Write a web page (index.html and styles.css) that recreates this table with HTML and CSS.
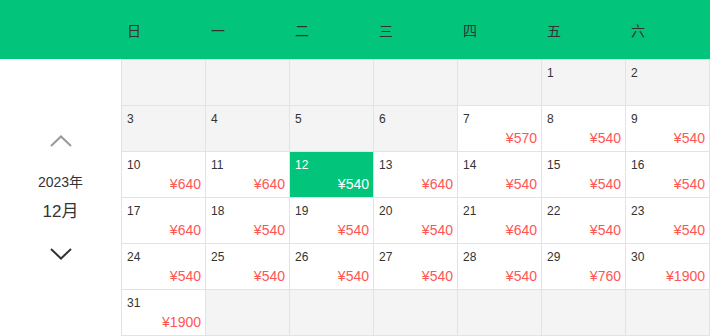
FILE: index.html
```html
<!DOCTYPE html>
<html lang="zh">
<head>
<meta charset="utf-8">
<link rel="stylesheet" href="styles.css">
</head>
<body>
<div class="cal">
  <div class="head">
    <div class="head-spacer"></div>
    <div class="wd">日</div><div class="wd">一</div><div class="wd">二</div><div class="wd">三</div><div class="wd">四</div><div class="wd">五</div><div class="wd">六</div>
  </div>
  <div class="body">
    <div class="side">
      <svg class="chev up" width="22" height="12" viewBox="0 0 22 12"><polyline points="1,11 11,1.5 21,11" fill="none" stroke="#9a9a9a" stroke-width="2"/></svg>
      <div class="year">2023年</div>
      <div class="month">12月</div>
      <svg class="chev down" width="22" height="12" viewBox="0 0 22 12"><polyline points="1,1 11,10.5 21,1" fill="none" stroke="#333" stroke-width="2"/></svg>
    </div>
    <div class="grid">
      <div class="cell off"></div><div class="cell off"></div><div class="cell off"></div><div class="cell off"></div><div class="cell off"></div>
      <div class="cell off"><span class="d">1</span></div>
      <div class="cell off"><span class="d">2</span></div>

      <div class="cell off"><span class="d">3</span></div>
      <div class="cell off"><span class="d">4</span></div>
      <div class="cell off"><span class="d">5</span></div>
      <div class="cell off"><span class="d">6</span></div>
      <div class="cell"><span class="d">7</span><span class="p">¥570</span></div>
      <div class="cell"><span class="d">8</span><span class="p">¥540</span></div>
      <div class="cell"><span class="d">9</span><span class="p">¥540</span></div>

      <div class="cell"><span class="d">10</span><span class="p">¥640</span></div>
      <div class="cell"><span class="d">11</span><span class="p">¥640</span></div>
      <div class="cell sel"><span class="d">12</span><span class="p">¥540</span></div>
      <div class="cell"><span class="d">13</span><span class="p">¥640</span></div>
      <div class="cell"><span class="d">14</span><span class="p">¥540</span></div>
      <div class="cell"><span class="d">15</span><span class="p">¥540</span></div>
      <div class="cell"><span class="d">16</span><span class="p">¥540</span></div>

      <div class="cell"><span class="d">17</span><span class="p">¥640</span></div>
      <div class="cell"><span class="d">18</span><span class="p">¥540</span></div>
      <div class="cell"><span class="d">19</span><span class="p">¥540</span></div>
      <div class="cell"><span class="d">20</span><span class="p">¥540</span></div>
      <div class="cell"><span class="d">21</span><span class="p">¥640</span></div>
      <div class="cell"><span class="d">22</span><span class="p">¥540</span></div>
      <div class="cell"><span class="d">23</span><span class="p">¥540</span></div>

      <div class="cell"><span class="d">24</span><span class="p">¥540</span></div>
      <div class="cell"><span class="d">25</span><span class="p">¥540</span></div>
      <div class="cell"><span class="d">26</span><span class="p">¥540</span></div>
      <div class="cell"><span class="d">27</span><span class="p">¥540</span></div>
      <div class="cell"><span class="d">28</span><span class="p">¥540</span></div>
      <div class="cell"><span class="d">29</span><span class="p">¥760</span></div>
      <div class="cell"><span class="d">30</span><span class="p">¥1900</span></div>

      <div class="cell"><span class="d">31</span><span class="p">¥1900</span></div>
      <div class="cell off"></div><div class="cell off"></div><div class="cell off"></div><div class="cell off"></div><div class="cell off"></div><div class="cell off"></div>
    </div>
  </div>
</div>
</body>
</html>
```

FILE: styles.css
```css
* { box-sizing: border-box; }
html, body { margin: 0; padding: 0; background: #fff; }
body {
  font-family: "Liberation Sans", "Noto Sans CJK SC", sans-serif;
  color: #333;
}
.cal { width: 710px; }
.head {
  display: flex;
  height: 59px;
  background: #02c57b;
  align-items: center;
}
.head-spacer { width: 121px; }
.wd {
  width: 84px;
  padding-left: 6px;
  font-size: 14px;
  line-height: 20px;
  color: #333;
  font-family: "Noto Sans CJK SC", sans-serif;
}
.body { display: flex; }
.side {
  width: 121px;
  height: 277px;
  display: flex;
  flex-direction: column;
  align-items: center;
  justify-content: center;
}
.chev { display: block; }
.year {
  margin-top: 25px;
  font-size: 14px;
  line-height: 20px;
}
.month {
  margin-top: 8px;
  font-size: 17px;
  line-height: 24px;
}
.chev.down { margin-top: 24px; }
.grid {
  display: grid;
  grid-template-columns: repeat(7, 84px);
  grid-auto-rows: 46px;
  border-right: 1px solid #e3e3e3;
  border-bottom: 1px solid #e3e3e3;
}
.cell {
  border-left: 1px solid #e3e3e3;
  border-top: 1px solid #e3e3e3;
  background: #fff;
  display: flex;
  flex-direction: column;
  justify-content: space-between;
  padding: 6px 4px 5px 5px;
}
.cell.off { background: #f4f4f4; }
.cell.sel { background: #02c57b; }
.d {
  font-size: 12px;
  line-height: 14px;
  color: #333;
}
.p {
  font-size: 14px;
  line-height: 16px;
  text-align: right;
  color: #ff5552;
}
.sel .d, .sel .p { color: #fff; }
```
